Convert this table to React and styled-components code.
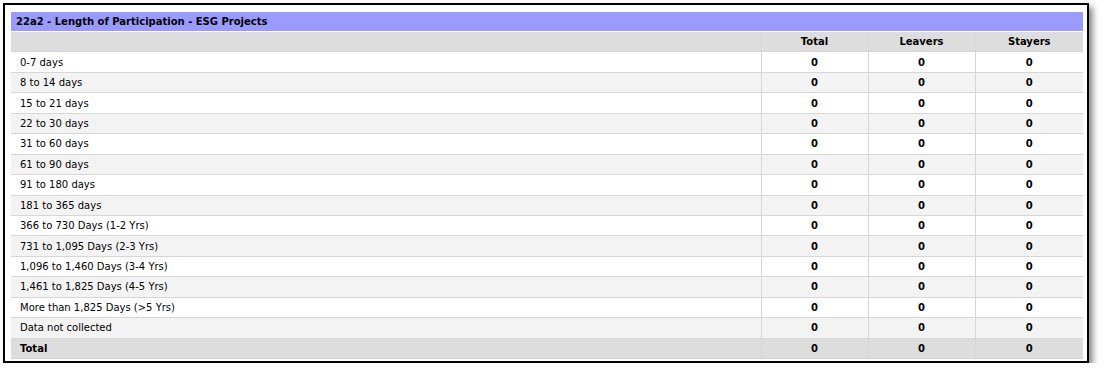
import styled, { createGlobalStyle } from "styled-components";

const GlobalStyle = createGlobalStyle`
body {
    margin: 0;
    background: #fff;
    font-family: "DejaVu Sans", Verdana, sans-serif;
}
`;

const rows = [
    "0-7 days",
    "8 to 14 days",
    "15 to 21 days",
    "22 to 30 days",
    "31 to 60 days",
    "61 to 90 days",
    "91 to 180 days",
    "181 to 365 days",
    "366 to 730 Days (1-2 Yrs)",
    "731 to 1,095 Days (2-3 Yrs)",
    "1,096 to 1,460 Days (3-4 Yrs)",
    "1,461 to 1,825 Days (4-5 Yrs)",
    "More than 1,825 Days (>5 Yrs)",
    "Data not collected",
];

const App = () => {
    return <>
        <GlobalStyle />
        <Frame>
            <Table>
                <colgroup>
                    <col style={{ width: 750 }} />
                    <col style={{ width: 107 }} />
                    <col style={{ width: 107 }} />
                    <col style={{ width: 108 }} />
                </colgroup>
                <thead>
                    <tr>
                        <TitleCell colSpan={4}>22a2 - Length of Participation - ESG Projects</TitleCell>
                    </tr>
                    <Row $bg="#dddddd">
                        <HeadCell></HeadCell>
                        <HeadCell>Total</HeadCell>
                        <HeadCell>Leavers</HeadCell>
                        <HeadCell>Stayers</HeadCell>
                    </Row>
                </thead>
                <tbody>
                    {rows.map((label, i) => (
                        <Row key={label} $bg={i % 2 ? "#f3f3f3" : "#ffffff"}>
                            <LabelCell>{label}</LabelCell>
                            <NumCell>0</NumCell>
                            <NumCell>0</NumCell>
                            <NumCell>0</NumCell>
                        </Row>
                    ))}
                    <Row $bg="#dddddd">
                        <LabelCell $bold>Total</LabelCell>
                        <NumCell>0</NumCell>
                        <NumCell>0</NumCell>
                        <NumCell>0</NumCell>
                    </Row>
                </tbody>
            </Table>
        </Frame>
    </>
}

export default App;

const Frame = styled.div`
margin: 3px 0 0 3px;
width: 1086px;
height: 360px;
box-sizing: border-box;
border: 2px solid #000;
background: #fff;
box-shadow: 4px 4px 6px rgba(0, 0, 0, 0.45);
padding: 7px 4px 0 6px;
`;

const Table = styled.table`
width: 1072px;
border-collapse: collapse;
table-layout: fixed;
font-size: 10px;
color: #000;
`;

const TitleCell = styled.td`
background: #9b9bff;
font-weight: bold;
height: 19px;
padding: 0 5px;
border-bottom: 1px solid #fff;
`;

const Row = styled.tr`
background: ${p => p.$bg};
td, th {
    height: 19.45px;
    border-bottom: 1px solid #d6d6d6;
    border-left: 1px solid #d6d6d6;
}
td:first-child, th:first-child {
    border-left: none;
}
`;

const HeadCell = styled.th`
font-weight: bold;
text-align: center;
padding: 0;
`;

const LabelCell = styled.td`
padding: 0 9px;
font-weight: ${p => p.$bold ? "bold" : "normal"};
white-space: nowrap;
`;

const NumCell = styled.td`
text-align: center;
font-weight: bold;
padding: 0;
`;
